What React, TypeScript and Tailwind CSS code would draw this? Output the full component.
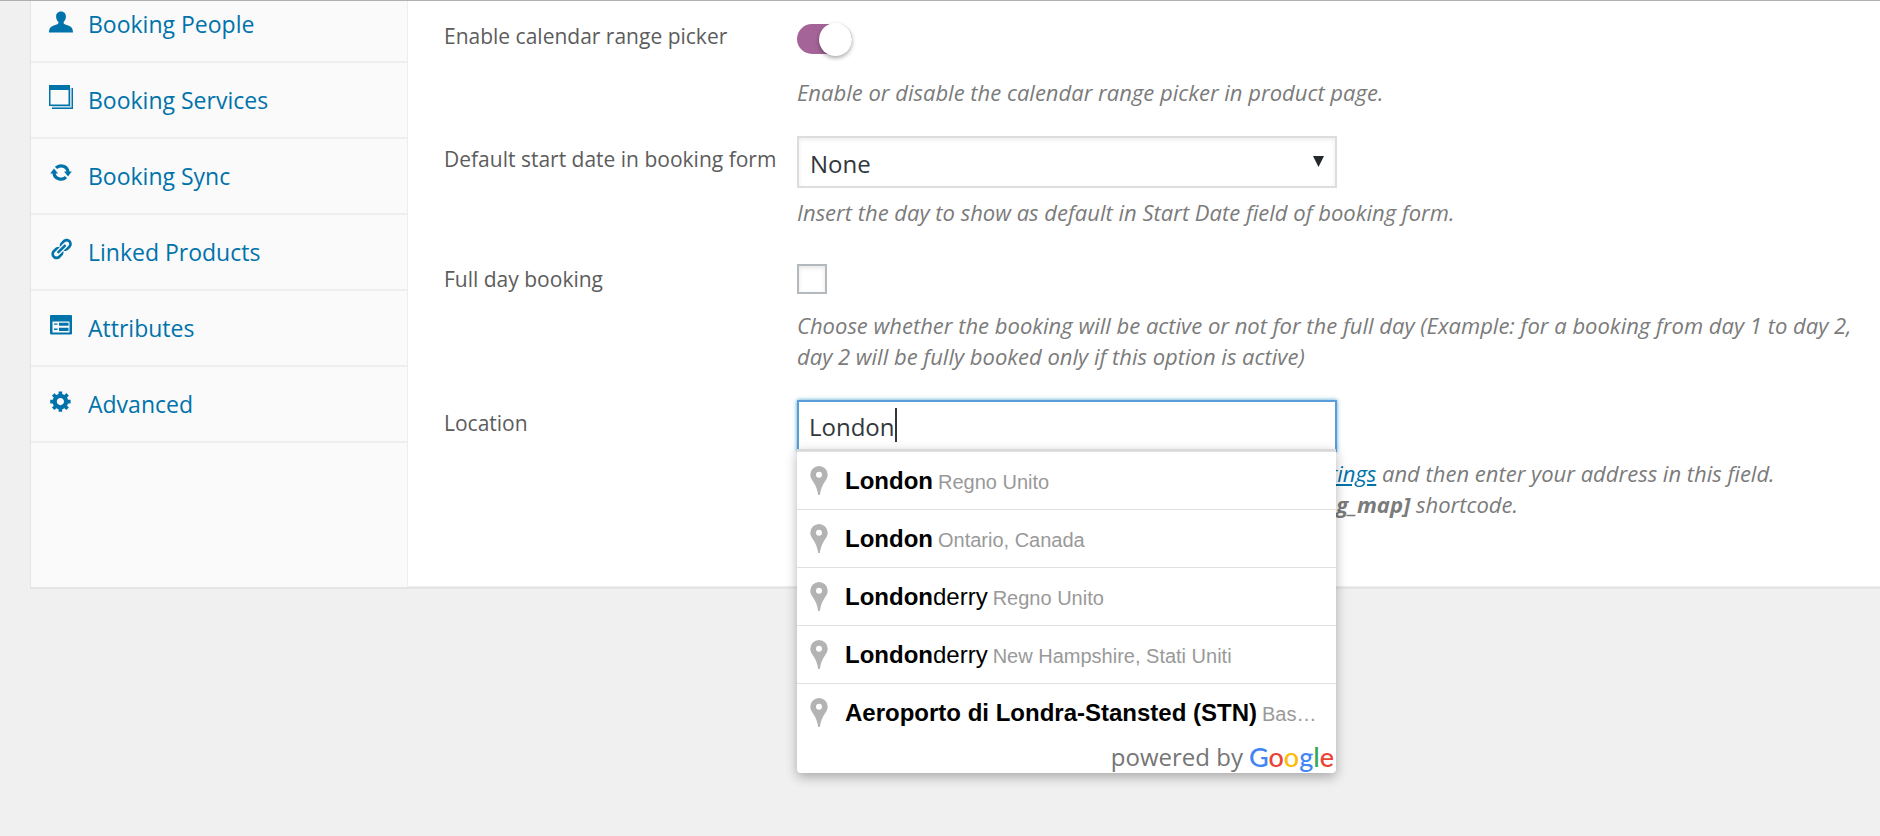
import { useState } from "react";
import type { ReactNode } from "react";

type NavItem = { label: string; icon: ReactNode };

const PersonIcon = () => (
  <svg viewBox="0 0 24 24" className="size-6" fill="currentColor" aria-hidden="true">
    <path d="M12 2.500c3.200 0 5.100 2.300 4.900 5.200-.1 2.300-1 4.100-2.300 5.200v1.300c.6 1.200 2.500 1.500 4.600 2.200 3 1 4.700 2.500 4.800 7.100H0c.1-4.600 1.800-6.100 4.800-7.100 2.100-.7 4-1 4.600-2.200v-1.300C8.100 11.800 7.200 10 7.100 7.700 6.900 4.800 8.800 2.500 12 2.500z" />
  </svg>
);

const WindowsIcon = () => (
  <svg viewBox="0 0 24 24" className="size-6" fill="none" stroke="currentColor" aria-hidden="true">
    <path d="M.75 1v19.300h19.500V1" strokeWidth="1.500" />
    <path d="M0 0h21v5H0z" fill="currentColor" stroke="none" />
    <path d="M23.300 3v20.200H3" strokeWidth="1.400" />
    <path d="M21.800 3v18.800H3" strokeWidth="1" opacity=".35" />
  </svg>
);

const SyncIcon = () => (
  <svg viewBox="0 0 24 24" className="size-6" fill="none" stroke="currentColor" strokeWidth="3.200" aria-hidden="true">
    <path d="M7 6.900A7 6.600 0 0 1 19 11" />
    <path d="M17 16.100A7 6.600 0 0 1 5 12" />
    <path d="M15 10.500h7.800L19 15.500zM1.200 12.500H9L5 7.500z" fill="currentColor" stroke="none" />
  </svg>
);

const LinkIcon = () => (
  <svg viewBox="0 0 20 20" className="size-6" fill="currentColor" aria-hidden="true">
    <path d="M17.740 2.760c1.680 1.690 1.680 4.410 0 6.100l-1.530 1.520c-1.120 1.120-2.700 1.470-4.140 1.090l2.620-2.610.76-.77.76-.76c.84-.84.84-2.200 0-3.040-.84-.85-2.200-.85-3.040 0l-.77.76-3.380 3.380c-.37-1.440-.02-3.020 1.100-4.140l1.520-1.530c1.690-1.680 4.420-1.680 6.100 0zM8.590 13.430l5.340-5.340c.42-.42.42-1.100 0-1.520-.44-.43-1.130-.39-1.530 0l-5.330 5.340c-.42.42-.42 1.100 0 1.520.44.43 1.130.39 1.520 0zm-.76 2.290l4.140-4.150c.38 1.440.03 3.020-1.090 4.140l-1.520 1.530c-1.690 1.680-4.410 1.680-6.100 0-1.680-1.680-1.680-4.420 0-6.100l1.530-1.520c1.120-1.120 2.700-1.470 4.140-1.100l-4.140 4.150c-.85.84-.85 2.200 0 3.050.84.84 2.200.84 3.040 0z" />
  </svg>
);

const TableIcon = () => (
  <svg viewBox="0 0 24 24" className="size-6" fill="currentColor" aria-hidden="true">
    <path
      fillRule="evenodd"
      d="M2 2h20a1 1 0 0 1 1 1v17.500a1 1 0 0 1-1 1H2a1 1 0 0 1-1-1V3a1 1 0 0 1 1-1zm1.500 6.500v11h17v-11z"
    />
    <path d="M10 9.700h9.500v3H10zM10 14.800h9.500v3.200H10zM5 10.400h3.500v1.400H5zM5 15.500h3.500V17H5z" />
  </svg>
);

const GearIcon = () => (
  <svg viewBox="0 0 20 20" className="size-6" fill="currentColor" aria-hidden="true">
    <path
      fillRule="evenodd"
      d="M18 12h-2.180c-.17.7-.44 1.350-.81 1.930l1.540 1.540-2.100 2.100-1.540-1.540c-.58.36-1.230.63-1.910.79V19H8v-2.180c-.68-.16-1.330-.43-1.910-.79l-1.540 1.540-2.120-2.120 1.540-1.540c-.36-.58-.63-1.230-.79-1.910H1V9.030h2.170c.16-.7.44-1.350.8-1.940L2.430 5.550l2.100-2.100 1.540 1.540c.58-.37 1.240-.64 1.930-.81V2h3v2.180c.68.16 1.330.43 1.910.79l1.540-1.540 2.120 2.120-1.540 1.540c.36.59.64 1.240.8 1.940H18V12zm-8.500 1.500c1.660 0 3-1.340 3-3s-1.340-3-3-3-3 1.340-3 3 1.340 3 3 3z"
    />
  </svg>
);

const PinIcon = () => (
  <svg viewBox="0 0 18 30" className="h-[30px] w-[18px] shrink-0" aria-hidden="true">
    <path fill="#b3b3b3" fillRule="evenodd" d="M9 0a8.700 8.700 0 0 1 8.700 8.700c0 2.900-1.500 5-3.400 7.800-2 3-3.700 7-4.500 12.500H8.200c-.8-5.500-2.500-9.500-4.500-12.500C1.800 13.700.3 11.600.3 8.700A8.700 8.700 0 0 1 9 0zm0 5.800a3 3 0 1 0 0 6 3 3 0 0 0 0-6z" />
  </svg>
);

const navItems: NavItem[] = [
  { label: "Booking People", icon: <PersonIcon /> },
  { label: "Booking Services", icon: <WindowsIcon /> },
  { label: "Booking Sync", icon: <SyncIcon /> },
  { label: "Linked Products", icon: <LinkIcon /> },
  { label: "Attributes", icon: <TableIcon /> },
  { label: "Advanced", icon: <GearIcon /> },
];

const suggestions = [
  { match: "London", rest: "", area: "Regno Unito" },
  { match: "London", rest: "", area: "Ontario, Canada" },
  { match: "London", rest: "derry", area: "Regno Unito" },
  { match: "London", rest: "derry", area: "New Hampshire, Stati Uniti" },
  { match: "Aeroporto di Londra-Stansted (STN)", rest: "", area: "Bassingbourn Road, Stansted" },
];

function Description({ children }: { children: ReactNode }) {
  return <p className="text-[22px] leading-[31px] text-[#7b7b7b] italic">{children}</p>;
}

function Field({ id, label, children }: { id: string; label: string; children: ReactNode }) {
  return (
    <div className="flex">
      <label htmlFor={id} className="w-[353px] shrink-0 text-[21px] leading-[46px] whitespace-nowrap text-[#5c5c5c]">
        {label}
      </label>
      <div className="min-w-0 flex-1">{children}</div>
    </div>
  );
}

export default function App() {
  const [rangePicker, setRangePicker] = useState(true);
  const [fullDay, setFullDay] = useState(false);
  const [place, setPlace] = useState("London");

  return (
    <div className="min-h-screen overflow-x-hidden border-t border-[#b0b0b0] bg-[#f0f0f0] pl-[30px] font-['Open_Sans',sans-serif]">
      <div className="flex border-b-2 border-l border-[#e5e5e5] bg-white">
        <nav className="w-[377px] shrink-0 border-r border-[#eee] bg-[#fafafa] pb-36">
          <ul className="-mt-[14px]">
            {navItems.map((item) => (
              <li key={item.label} className="border-b-2 border-[#eee]">
                <a href="#" className="flex h-[74px] items-center gap-[15px] pl-[18px] text-[23px] text-[#0073aa]">
                  <span className="pb-1.5">{item.icon}</span>
                  {item.label}
                </a>
              </li>
            ))}
          </ul>
        </nav>

        <main className="flex min-w-0 flex-1 flex-col gap-7 border-b border-[#eee] pt-3 pr-6 pl-9">
          <Field id="range" label="Enable calendar range picker">
            <div className="flex h-[52px] items-center">
              <button
                id="range"
                type="button"
                role="switch"
                aria-checked={rangePicker}
                onClick={() => setRangePicker(!rangePicker)}
                className={`flex h-[30px] w-[55px] items-center rounded-full ${rangePicker ? "justify-end bg-[#a46497]" : "justify-start bg-[#ccc]"}`}
              >
                <span className="size-[33px] shrink-0 rounded-full bg-white shadow-[0_2px_4px_rgba(0,0,0,0.35)]" />
              </button>
            </div>
            <div className="pt-3">
              <Description>Enable or disable the calendar range picker in product page.</Description>
            </div>
          </Field>

          <Field id="start" label="Default start date in booking form">
            <div className="relative w-[540px]">
              <select
                id="start"
                className="h-[52px] w-full appearance-none border-2 border-[#ddd] bg-white pt-1 pl-[11px] text-2xl text-[#32373c] shadow-[inset_0_2px_4px_rgba(0,0,0,0.07)]"
              >
                <option>None</option>
              </select>
              <svg viewBox="0 0 10 10" className="pointer-events-none absolute top-5 right-[13px] size-[11px]" aria-hidden="true">
                <path d="M0 0h10L5 10z" fill="#23282d" />
              </svg>
            </div>
            <div className="pt-[9px]">
              <Description>Insert the day to show as default in Start Date field of booking form.</Description>
            </div>
          </Field>

          <Field id="fullday" label="Full day booking">
            <div className="flex h-[46px] items-center">
              <input
                id="fullday"
                type="checkbox"
                checked={fullDay}
                onChange={() => setFullDay(!fullDay)}
                className="size-[30px] appearance-none border-2 border-[#b4b9be] bg-white shadow-[inset_0_2px_4px_rgba(0,0,0,0.1)] checked:bg-[#0073aa]"
              />
            </div>
            <div className="pt-2">
              <Description>
                Choose whether the booking will be active or not for the full day (Example: for a booking from day 1 to day 2, day 2 will be fully booked only if this option is active)
              </Description>
            </div>
          </Field>

          <Field id="location" label="Location">
            <div className="relative w-[540px]">
              <input
                id="location"
                type="text"
                value={place}
                onChange={(event) => setPlace(event.target.value)}
                className="h-[52px] w-full border-2 border-[#5b9dd9] bg-white pl-[10px] text-2xl text-[#32373c] caret-transparent shadow-[0_0_4px_rgba(30,140,190,0.8)] outline-none"
              />
              <span className="absolute top-2 left-[98px] h-[34px] w-0.5 bg-[#32373c]" />
              <div className="absolute top-[49px] left-0 z-10 w-[539px] rounded-b-sm border-t-2 border-[#d9d9d9] bg-white font-['Liberation_Sans',Arial,sans-serif] shadow-[0_4px_12px_rgba(0,0,0,0.3)]">
                <ul>
                  {suggestions.map((item) => (
                    <li key={item.match + item.rest + item.area} className="flex h-[58px] items-center gap-[17px] border-t border-[#e0e0e0] pr-3 pl-[13px]">
                      <PinIcon />
                      <div className="min-w-0 truncate text-xl text-[#999]">
                        <span className="pr-[5px] text-2xl text-black">
                          <b>{item.match}</b>
                          {item.rest}
                        </span>
                        {item.area}
                      </div>
                    </li>
                  ))}
                </ul>
                <div className="flex h-8 items-center justify-end gap-1.5 pr-0.5 font-['Open_Sans',sans-serif] text-2xl text-[#757575]">
                  powered by
                  <span className="font-['Lato',sans-serif] text-[27px] font-medium">
                    <span className="text-[#4285f4]">G</span>
                    <span className="text-[#ea4335]">o</span>
                    <span className="text-[#fbbc05]">o</span>
                    <span className="text-[#4285f4]">g</span>
                    <span className="text-[#34a853]">l</span>
                    <span className="text-[#ea4335]">e</span>
                  </span>
                </div>
              </div>
            </div>
            <div className="pt-1.5 whitespace-nowrap">
              <Description>
                To view the map, enter your Google Maps API key in{" "}
                <a href="#" className="text-[#0073aa] underline">
                  settings
                </a>{" "}
                and then enter your address in this field.
                <br />
                You can display the map on your page with the <b>[booking_map]</b> shortcode.
              </Description>
            </div>
          </Field>
        </main>
      </div>
    </div>
  );
}
